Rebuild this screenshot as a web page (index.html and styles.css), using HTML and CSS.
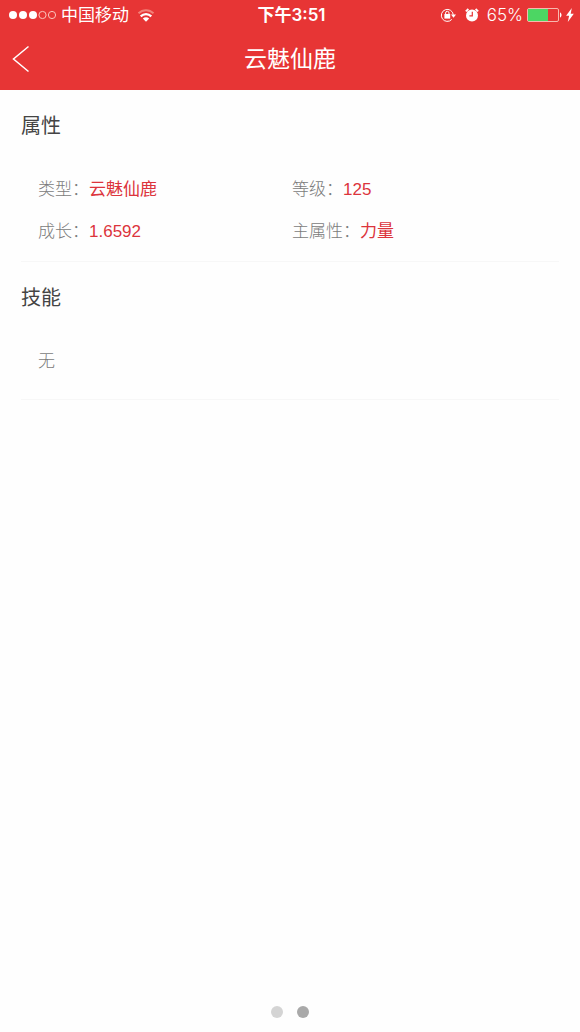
FILE: index.html
```html
<!DOCTYPE html>
<html lang="zh-CN">
<head>
<meta charset="utf-8">
<meta name="viewport" content="width=device-width, initial-scale=1">
<title>云魅仙鹿</title>
<link rel="stylesheet" href="styles.css">
</head>
<body>
<header class="top">
  <div class="status">
    <div class="status-left">
      <svg class="signal" width="48" height="10" viewBox="0 0 48 10" aria-hidden="true">
        <g fill="#fff"><circle cx="4" cy="5" r="4"/><circle cx="14" cy="5" r="4"/><circle cx="24" cy="5" r="4"/></g>
        <g fill="none" stroke="#fbc4bd" stroke-width="1"><circle cx="33.500" cy="5" r="3.600"/><circle cx="43" cy="5" r="3.600"/></g>
      </svg>
      <span class="carrier">中国移动</span>
      <svg class="wifi" width="18" height="13" viewBox="0 0 18 13" fill="none" aria-hidden="true">
        <path d="M1.500 4.300C5.800.2 12.200.2 16.500 4.300" stroke="#f28078" stroke-width="2"/>
        <path d="M3.700 7.400c3-3 7.600-3 10.600 0" stroke="#fff" stroke-width="2.200"/>
        <path d="M5.800 9.600c1.800-1.700 4.600-1.700 6.400 0L9 12.800z" fill="#fff"/>
      </svg>
    </div>
    <time class="clock">下午3:51</time>
    <div class="status-right">
      <svg class="lock" width="17" height="14" viewBox="0 0 17 14" fill="none" stroke="#fff" aria-hidden="true">
        <path d="M11.800 11.400A6 6 0 1 1 13.300 6.800"/>
        <path d="M11 6.600h5l-2.500 3.200z" fill="#fff" stroke="none"/>
        <rect x="4.400" y="6" width="5.800" height="4.600" fill="#fff" stroke="none"/>
        <path d="M5.600 6.300V5a1.700 1.700 0 0 1 3.400 0v1.300"/>
      </svg>
      <svg class="alarm" width="14" height="14" viewBox="0 0 14 14" aria-hidden="true">
        <circle cx="7" cy="7.400" r="6" fill="#fff"/>
        <path d="M.8 3.400 3.400 1M13.200 3.400 10.600 1" stroke="#fff" stroke-width="1.800"/>
        <path d="M7.300 3.800v4H4.400" fill="none" stroke="#e73535" stroke-width="1.200"/>
      </svg>
      <span class="percent">65%</span>
      <svg class="battery" width="35" height="14" viewBox="0 0 35 14" aria-hidden="true">
        <rect x=".5" y=".5" width="31" height="13" rx="1.500" fill="none" stroke="#f7b8ae"/>
        <rect x="1" y="1" width="20" height="12" fill="#4cd663"/>
        <path d="M33 4.500c2 .5 2 4.500 0 5z" fill="#fff"/>
      </svg>
      <svg class="bolt" width="8" height="14" viewBox="0 0 8 14" aria-hidden="true"><path d="M5.800 0 .1 7.800h3L1.800 14l6-8.200H4.700z" fill="#fff"/></svg>
    </div>
  </div>
  <div class="nav">
    <button class="back" type="button" aria-label="返回">
      <svg width="18" height="28" viewBox="0 0 18 28" fill="none" stroke="#fff" stroke-width="1.500" aria-hidden="true"><path d="M16.500 1.500 1.500 14l15 12.500"/></svg>
    </button>
    <h1 class="title">云魅仙鹿</h1>
  </div>
</header>
<main class="content">
  <section class="section">
    <h2 class="heading">属性</h2>
    <dl class="attributes">
      <div class="attribute"><dt>类型：</dt><dd>云魅仙鹿</dd></div>
      <div class="attribute"><dt>等级：</dt><dd>125</dd></div>
      <div class="attribute"><dt>成长：</dt><dd>1.6592</dd></div>
      <div class="attribute"><dt>主属性：</dt><dd>力量</dd></div>
    </dl>
  </section>
  <section class="section">
    <h2 class="heading">技能</h2>
    <p class="empty">无</p>
  </section>
</main>
<nav class="pager" aria-label="分页">
  <button class="dot" type="button" aria-label="第1页"></button>
  <button class="dot dot-current" type="button" aria-label="第2页" aria-current="page"></button>
</nav>
</body>
</html>
```

FILE: styles.css
```css
* {
  box-sizing: border-box;
}

body {
  margin: 0;
  min-height: 100vh;
  display: flex;
  flex-direction: column;
  background: #fefefe;
  color: #7b7b7b;
  font-family: "Liberation Sans", "Noto Sans CJK SC", sans-serif;
  font-size: 17px;
  font-weight: 300;
  line-height: 26px;
}

.top {
  background: #e73535;
  color: #fff;
}

.status {
  display: grid;
  grid-template-columns: 1fr auto 1fr;
  align-items: center;
  height: 30px;
  padding: 0 6px 0 9px;
  font-family: Inter, "Noto Sans CJK SC", sans-serif;
  font-weight: 400;
}

.status-left,
.status-right {
  display: flex;
  align-items: center;
}

.status-right {
  justify-content: flex-end;
}

.carrier {
  margin: 0 8px 0 4px;
}

.percent {
  font-weight: 300;
}

.clock {
  font-weight: 600;
}

.alarm {
  margin: 0 8px;
}

.battery {
  margin: 0 4px;
}

.nav {
  display: grid;
  grid-template-columns: 48px 1fr 48px;
  align-items: center;
  height: 60px;
  padding-bottom: 2px;
}

.back {
  display: flex;
  padding: 0 12px;
  border: 0;
  background: none;
}

.title {
  margin: 0;
  font-size: 23px;
  font-weight: 400;
  text-align: center;
}

.content {
  flex: 1;
  padding: 0 21px;
}

.section {
  padding-top: 21px;
  border-bottom: 1px solid #f7f7f7;
}

.heading {
  margin: 0;
  color: #444;
  font-size: 20px;
  font-weight: 400;
  line-height: 30px;
}

.attributes {
  display: grid;
  grid-template-columns: 1fr 1fr;
  gap: 16px 4px;
  margin: 0;
  padding: 36px 17px 16px;
}

.attribute {
  display: flex;
}

.attribute dd {
  margin: 0;
  color: #dc343c;
  font-weight: 400;
}

.empty {
  margin: 0;
  padding: 36px 17px 24px;
}

.pager {
  display: flex;
  justify-content: center;
  gap: 14px;
  padding: 14px 0;
}

.dot {
  width: 12px;
  height: 12px;
  padding: 0;
  border: 0;
  border-radius: 50%;
  background: #d4d4d4;
}

.dot-current {
  background: #a9a9a9;
}
```
